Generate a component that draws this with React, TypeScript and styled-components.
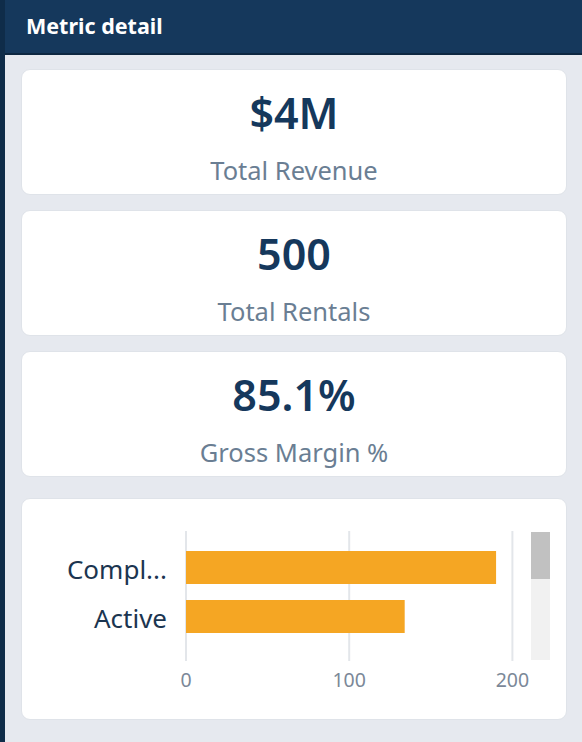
import React from "react";
import styled, { createGlobalStyle } from "styled-components";

const GlobalStyle = createGlobalStyle`
  html, body {
    margin: 0;
    padding: 0;
    background: #e6e9ef;
  }
  body {
    font-family: "Noto Sans", "Open Sans", sans-serif;
  }
`;

interface IMetric {
    value: string;
    label: string;
}

const metrics: IMetric[] = [
    { value: "$4M", label: "Total Revenue" },
    { value: "500", label: "Total Rentals" },
    { value: "85.1%", label: "Gross Margin %" },
];

const statusRows = [
    { label: "Compl...", count: 190 },
    { label: "Active", count: 134 },
];

const Panel = styled.div`
    width: 582px;
    height: 742px;
    box-sizing: border-box;
    border-left: 5px solid #0f2c49;
    background: #e6e9ef;
    display: flex;
    flex-direction: column;
    overflow: hidden;
`;

const Header = styled.div`
    height: 55px;
    box-sizing: border-box;
    background: #15385c;
    border-bottom: 2px solid #0d2741;
    color: #ffffff;
    font-size: 21.5px;
    font-weight: 700;
    display: flex;
    align-items: center;
    padding-left: 21px;
    padding-bottom: 2px;
`;

const Body = styled.div`
    display: flex;
    flex-direction: column;
    gap: 15px;
    padding: 14px 15px 0 16px;
`;

const Card = styled.div`
    background: #ffffff;
    border: 1px solid #dfe3e9;
    border-radius: 9px;
`;

const MetricCard = styled(Card)`
    height: 126px;
    box-sizing: border-box;
    display: flex;
    flex-direction: column;
    align-items: center;
    padding-top: 12px;
`;

const Value = styled.div`
    color: #15385c;
    font-size: 43px;
    font-weight: 600;
    line-height: 62px;
`;

const Label = styled.div`
    color: #6a7e93;
    font-size: 25.5px;
    line-height: 36px;
    margin-top: 8px;
`;

const ChartCard = styled(Card)`
    height: 222px;
    box-sizing: border-box;
    margin-top: 6px;
    display: flex;
    align-items: flex-start;
`;

const ChartSvg = styled.svg`
    display: block;
    overflow: visible;
`;

const ScrollTrack = styled.div`
    margin-top: 33px;
    margin-left: 4px;
    width: 19px;
    height: 128px;
    background: #f1f1f1;
    display: flex;
    flex-direction: column;
`;

const ScrollThumb = styled.div`
    height: 47px;
    background: #c1c1c1;
`;

const x0 = 164;
const perUnit = 1.632;

const StatusChart = () => (
    <ChartSvg width="505" height="220">
        {[0, 100, 200].map((t) => (
            <g key={t}>
                <line x1={x0 + t * perUnit} x2={x0 + t * perUnit} y1={32} y2={162} stroke="#e3e6ea" strokeWidth={2} />
                <text
                    x={x0 + t * perUnit}
                    y={188}
                    textAnchor="middle"
                    fontSize={19.5}
                    fill="#7b8898"
                    fontFamily="Noto Sans, sans-serif"
                >
                    {t}
                </text>
            </g>
        ))}
        {statusRows.map((r, i) => (
            <g key={r.label}>
                <rect x={x0} y={52 + i * 49} width={r.count * perUnit} height={33} fill="#f5a623" />
                <text
                    x={145}
                    y={80 + i * 49}
                    textAnchor="end"
                    fontSize={26}
                    fill="#1b3550"
                    fontFamily="Noto Sans, sans-serif"
                >
                    {r.label}
                </text>
            </g>
        ))}
    </ChartSvg>
);

export default function App() {
    return (
        <>
            <GlobalStyle />
            <Panel>
                <Header>Metric detail</Header>
                <Body>
                    {metrics.map((m) => (
                        <MetricCard key={m.label}>
                            <Value>{m.value}</Value>
                            <Label>{m.label}</Label>
                        </MetricCard>
                    ))}
                    <ChartCard>
                        <StatusChart />
                        <ScrollTrack>
                            <ScrollThumb />
                        </ScrollTrack>
                    </ChartCard>
                </Body>
            </Panel>
        </>
    );
}
